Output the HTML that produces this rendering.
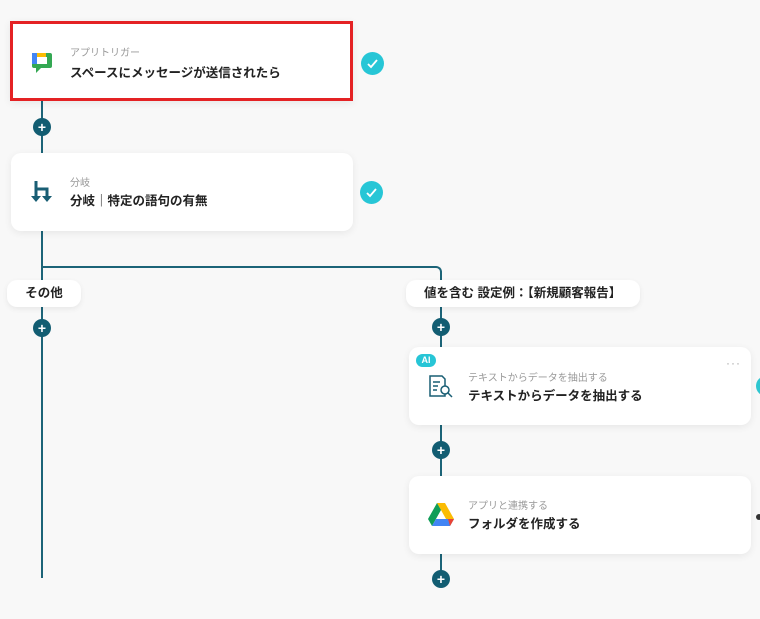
<!DOCTYPE html>
<html><head><meta charset="utf-8"><style>
*{margin:0;padding:0;box-sizing:border-box}
body{width:760px;height:619px;background:#f8f8f8;position:relative;overflow:hidden;font-family:"Liberation Sans","Noto Sans CJK JP",sans-serif;color:#222}
.ln{position:absolute;background:#1c6478}
.card{position:absolute;background:#fff;border-radius:10px;box-shadow:0 2px 8px rgba(0,0,0,.07)}
.sub{position:absolute;font-size:10px;color:#999}
.tt{position:absolute;font-size:12.5px;font-weight:bold;color:#222}
.plus{position:absolute;width:18px;height:18px;border-radius:50%;background:#125d72;color:#fff;font-weight:bold;font-size:14px;line-height:18px;text-align:center}
.chk{position:absolute;width:23px;height:23px;border-radius:50%;background:#27c6d6}
.pill{position:absolute;background:#fff;border-radius:10px;box-shadow:0 2px 6px rgba(0,0,0,.07);font-size:12.5px;font-weight:bold;line-height:27px}
</style></head><body>
<div class="ln" style="left:41px;top:101px;width:2px;height:52px"></div>
<div class="ln" style="left:41px;top:231px;width:2px;height:347px"></div>
<div style="position:absolute;left:41px;top:266px;width:401px;height:14px;border-top:2px solid #1c6478;border-right:2px solid #1c6478;border-top-right-radius:6px"></div>
<div class="ln" style="left:440px;top:307px;width:2px;height:271px"></div>

<div class="card" style="left:10px;top:21px;width:343px;height:80px;border:3px solid #e42224;border-radius:0"></div>
<svg style="position:absolute;left:32px;top:53px" width="20" height="20" viewBox="0 0 20 20"><rect x="0" y="0" width="20" height="15" rx="2" fill="#34a853"/><rect x="0" y="0" width="14" height="6" fill="#fbbc04"/><rect x="0" y="0" width="5" height="11" fill="#4285f4"/><rect x="5" y="4" width="10" height="7" fill="#fff"/><path d="M4 14 L4 20 L9 15Z" fill="#34a853"/></svg>
<div class="sub" style="left:70px;top:44px">アプリトリガー</div>
<div class="tt" style="left:70px;top:62px">スペースにメッセージが送信されたら</div>
<div class="chk" style="left:361px;top:52px"></div>
<svg style="position:absolute;left:366px;top:58px" width="13" height="11"><path d="M2 6 L5 9 L11 2" stroke="#fff" stroke-width="1.8" fill="none"/></svg>

<div class="plus" style="left:33px;top:118px">+</div>

<div class="card" style="left:11px;top:153px;width:342px;height:78px"></div>
<svg style="position:absolute;left:31px;top:180px" width="22" height="24" viewBox="0 0 22 24"><path d="M5 1 V18 M5 9 H16 V18" stroke="#195e74" stroke-width="3" fill="none"/><path d="M0 16 L10 16 L5 22Z M11 16 L21 16 L16 22Z" fill="#195e74"/></svg>
<div class="sub" style="left:70px;top:174px">分岐</div>
<div class="tt" style="left:70px;top:190px">分岐｜特定の語句の有無</div>
<div class="chk" style="left:360px;top:181px"></div>
<svg style="position:absolute;left:365px;top:187px" width="13" height="11"><path d="M2 6 L5 9 L11 2" stroke="#fff" stroke-width="1.8" fill="none"/></svg>

<div class="pill" style="left:7px;top:280px;width:74px;text-align:center">その他</div>
<div class="pill" style="left:406px;top:280px;width:234px;padding-left:18px">値を含む 設定例：【新規顧客報告】</div>
<div class="plus" style="left:33px;top:319px">+</div>
<div class="plus" style="left:432px;top:318px">+</div>

<div class="card" style="left:409px;top:347px;width:342px;height:78px"></div>
<div style="position:absolute;left:416px;top:354px;width:20px;height:13px;border-radius:7px;background:#27c5d6;color:#fff;font-size:9px;font-weight:bold;text-align:center;line-height:13px">AI</div>
<div style="position:absolute;left:726px;top:356px;font-size:12px;color:#aaa;letter-spacing:1px">···</div>
<svg style="position:absolute;left:428px;top:374px" width="26" height="26" viewBox="0 0 26 26"><path d="M2 2 H14 L17 5 V22 H2Z" stroke="#195e74" stroke-width="1.5" fill="none"/><path d="M5 8 H12 M5 12 H10 M5 16 H9" stroke="#195e74" stroke-width="1.5"/><circle cx="17" cy="16" r="4" stroke="#195e74" stroke-width="1.5" fill="#fff"/><path d="M20 19 L24 23" stroke="#195e74" stroke-width="1.5"/></svg>
<div class="sub" style="left:468px;top:369px">テキストからデータを抽出する</div>
<div class="tt" style="left:468px;top:385px">テキストからデータを抽出する</div>
<div style="position:absolute;left:756px;top:376px;width:20px;height:20px;border-radius:50%;background:#2ec6d0"></div>

<div class="plus" style="left:432px;top:441px">+</div>

<div class="card" style="left:409px;top:476px;width:342px;height:78px"></div>
<svg style="position:absolute;left:428px;top:503px" width="26" height="23" viewBox="0 0 26 23"><path d="M9 0 H17 L26 16 L22 23Z" fill="#fbbc04"/><path d="M9 0 L0 16 L4 23 L13 7Z" fill="#0f9d58"/><path d="M4 23 H22 L26 16 H8Z" fill="#4285f4"/><path d="M22 23 L26 16 H20Z" fill="#ea4335"/></svg>
<div class="sub" style="left:468px;top:497px">アプリと連携する</div>
<div class="tt" style="left:468px;top:513px">フォルダを作成する</div>
<div style="position:absolute;left:756px;top:514px;width:6px;height:6px;border-radius:50%;background:#333"></div>

<div class="plus" style="left:432px;top:570px">+</div>
</body></html>
